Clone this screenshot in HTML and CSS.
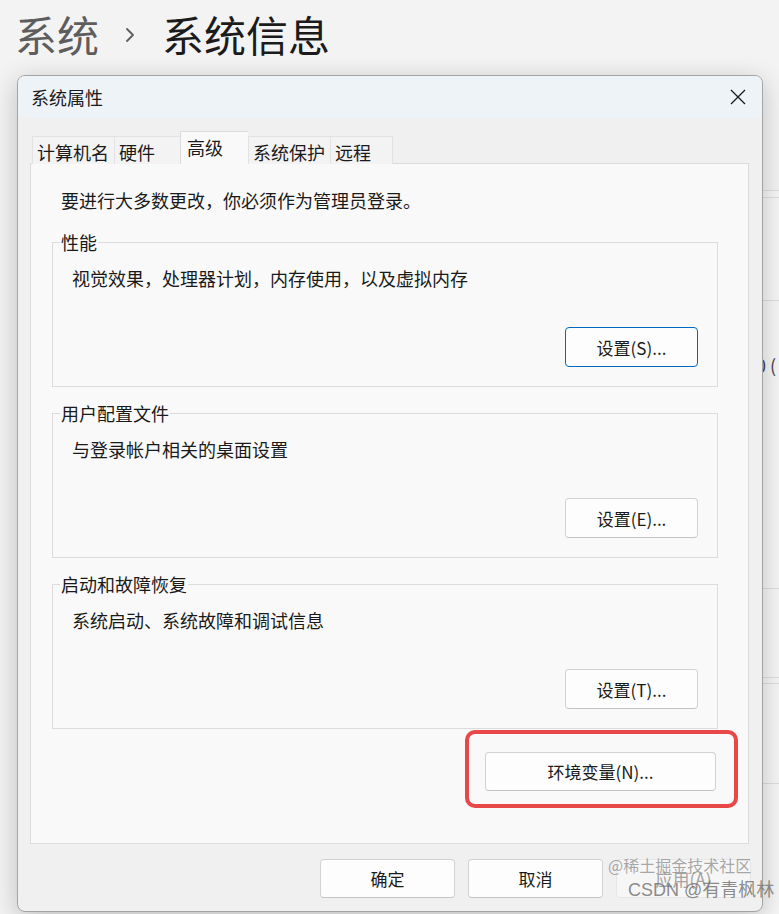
FILE: index.html
```html
<!DOCTYPE html>
<html lang="zh-CN">
<head>
    <meta charset="UTF-8">
    <meta name="viewport" content="width=device-width, initial-scale=1.0">
    <title>系统属性</title>
    <link rel="stylesheet" href="styles.css">
</head>
<body>
    <header class="page-title">
        <span class="crumb">系统</span>
        <svg class="chevron" width="10" height="16" viewBox="0 0 10 16"><path d="M2 2 L8 8 L2 14" fill="none" stroke="#5d5d5d" stroke-width="1.8" stroke-linecap="round" stroke-linejoin="round"/></svg>
        <span class="crumb current">系统信息</span>
    </header>

    <!-- settings page behind the dialog -->
    <div class="bg-list">
        <div class="bg-row" style="height:7px"></div>
        <div class="bg-row" style="height:103px"></div>
        <div class="bg-row bg-text" style="height:288px">0 (</div>
        <div class="bg-row" style="height:89px"></div>
        <div class="bg-row" style="height:6px"></div>
        <div class="bg-row" style="height:100px"></div>
        <div class="bg-row" style="height:131px"></div>
    </div>

    <div class="dialog">
        <div class="titlebar">
            <span>系统属性</span>
            <svg class="close" width="16" height="16" viewBox="0 0 16 16"><path d="M1 1 L15 15 M15 1 L1 15" stroke="#1a1a1a" stroke-width="1.3"/></svg>
        </div>
        <div class="dialog-body">
            <div class="tabs">
                <div class="tab">计算机名</div>
                <div class="tab">硬件</div>
                <div class="tab active">高级</div>
                <div class="tab">系统保护</div>
                <div class="tab last">远程</div>
            </div>
            <div class="panel">
                <p class="note">要进行大多数更改，你必须作为管理员登录。</p>

                <fieldset class="group">
                    <legend>性能</legend>
                    <p class="group-desc">视觉效果，处理器计划，内存使用，以及虚拟内存</p>
                    <div class="group-actions"><button class="btn default">设置(S)...</button></div>
                </fieldset>

                <fieldset class="group">
                    <legend>用户配置文件</legend>
                    <p class="group-desc">与登录帐户相关的桌面设置</p>
                    <div class="group-actions"><button class="btn">设置(E)...</button></div>
                </fieldset>

                <fieldset class="group">
                    <legend>启动和故障恢复</legend>
                    <p class="group-desc">系统启动、系统故障和调试信息</p>
                    <div class="group-actions"><button class="btn">设置(T)...</button></div>
                </fieldset>

                <div class="env-row">
                    <div class="env-wrap">
                        <button class="btn env">环境变量(N)...</button>
                        <div class="highlight"></div>
                    </div>
                </div>
            </div>
            <div class="footer">
                <button class="btn foot">确定</button>
                <button class="btn foot">取消</button>
                <button class="btn foot" disabled>应用(A)</button>
            </div>
        </div>
    </div>

    <div class="watermark">
        <div class="wm-1">@稀土掘金技术社区</div>
        <div class="wm-2">CSDN @有青枫林</div>
    </div>
</body>
</html>
```

FILE: styles.css
```css
body {
    margin: 0;
    width: 779px;
    height: 914px;
    overflow: hidden;
    position: relative;
    background: #f3f3f3;
    font-family: "Noto Sans CJK SC", "Microsoft YaHei", sans-serif;
    color: #1a1a1a;
}

/* page header */
.page-title {
    display: flex;
    align-items: center;
    height: 62px;
    box-sizing: border-box;
    padding: 6px 0 0 15px;
    font-size: 42px;
    line-height: 56px;
}
.crumb {
    color: #5d5d5d;
}
.crumb.current {
    color: #1b1b1b;
}
.chevron {
    margin: 2px 27px 0 26px;
}

/* list behind the dialog */
.bg-list {
    margin: 128px 0 0 700px;
}
.bg-row {
    border-top: 1px solid #dedede;
    background: #f6f6f6;
    box-sizing: border-box;
}
.bg-text {
    padding: 52px 0 0 56px;
    font-size: 18px;
    line-height: 24px;
    color: #444;
}

/* dialog window */
.dialog {
    position: absolute;
    left: 17px;
    top: 75px;
    width: 746px;
    height: 837px;
    box-sizing: border-box;
    border: 1px solid #a4a4a4;
    border-radius: 8px;
    background: #f0f0f0;
    box-shadow: 0 6px 26px rgba(0, 0, 0, 0.22);
    overflow: hidden;
}
.titlebar {
    height: 42px;
    display: flex;
    align-items: center;
    justify-content: space-between;
    padding: 0 16px 0 13px;
    background: #eef3f8;
    font-size: 18px;
}
.dialog-body {
    padding: 13px 13px 0 12px;
}

/* tabs */
.tabs {
    display: flex;
    align-items: flex-end;
    margin: 0 0 -1px 2px;
    position: relative;
    z-index: 1;
}
.tab {
    height: 28px;
    min-width: 66px;
    box-sizing: border-box;
    padding: 0 5px 0 4px;
    border: 1px solid #e2e2e2;
    border-bottom: 0;
    border-right: 0;
    background: #f3f3f3;
    font-size: 18px;
    line-height: 30px;
}
.tab.last {
    min-width: 63px;
    border-right: 1px solid #e2e2e2;
}
.tab.active {
    height: 33px;
    min-width: 68px;
    padding-left: 6px;
    background: #f9f9f9;
    border-color: #dcdcdc;
    line-height: 30px;
}

.panel {
    height: 681px;
    box-sizing: border-box;
    padding: 24px 30px 0 21px;
    background: #f9f9f9;
    border: 1px solid #dcdcdc;
}
.note {
    margin: 0 0 0 9px;
    font-size: 18px;
    line-height: 24px;
}

/* group boxes */
.group {
    margin: 14px 0 0;
    padding: 0;
    border: 1px solid #dcdcdc;
    min-width: 0;
}
.note + .group {
    margin-top: 18px;
}
.group legend {
    margin-left: 7px;
    padding: 0 1px;
    font-size: 18px;
    line-height: 24px;
}
.group-desc {
    margin: 12px 0 0 19px;
    font-size: 18px;
    line-height: 24px;
}
.group-actions {
    display: flex;
    justify-content: flex-end;
    padding: 37px 19px 19px 0;
}

/* buttons */
.btn {
    width: 133px;
    height: 40px;
    box-sizing: border-box;
    border: 1px solid #d2d2d2;
    border-bottom-color: #c4c4c4;
    border-radius: 4px;
    background: #fdfdfd;
    font-family: inherit;
    font-size: 17px;
    color: #1a1a1a;
    padding: 0;
}
.btn.default {
    border-color: #0067c0;
}
.btn.env {
    width: 231px;
    height: 39px;
}
.btn.foot {
    width: 135px;
    height: 39px;
}
.btn:disabled {
    background: #f6f6f6;
    border-color: #e6e6e6;
    color: #a3a3a3;
}

.env-row {
    display: flex;
    justify-content: flex-end;
    margin-top: 23px;
    padding-right: 2px;
}
.env-wrap {
    position: relative;
}
.highlight {
    position: absolute;
    top: -22px;
    left: -20px;
    right: -22px;
    bottom: -17px;
    border: 4px solid #e84848;
    border-radius: 10px;
}

.footer {
    display: flex;
    justify-content: flex-end;
    gap: 13px;
    margin: 15px -2px 0 0;
}

/* image watermark */
.watermark {
    position: absolute;
    left: 608px;
    top: 853px;
    pointer-events: none;
}
.wm-1 {
    font-size: 16px;
    line-height: 24px;
    color: rgba(140, 140, 140, 0.75);
}
.wm-2 {
    margin: 1px 0 0 20px;
    font-size: 18px;
    line-height: 24px;
    color: rgba(110, 110, 110, 0.8);
    font-family: "Liberation Sans", "Noto Sans CJK SC", sans-serif;
}
```
